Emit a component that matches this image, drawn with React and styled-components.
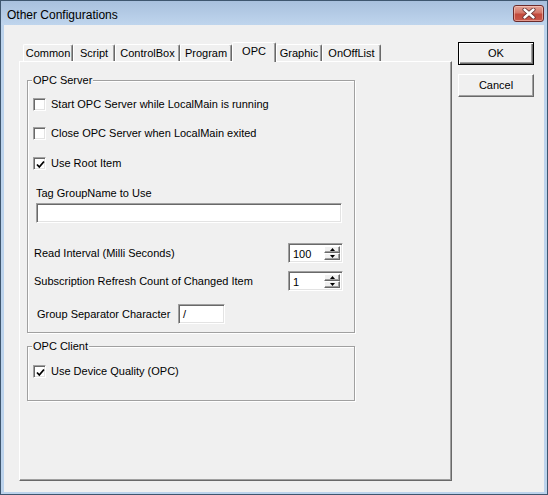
import React from "react";
import styled, { createGlobalStyle } from "styled-components";

const GlobalStyle = createGlobalStyle`
  html, body {
    margin: 0;
    padding: 0;
    background: #ffffff;
  }
  body {
    font-family: "Liberation Sans", Arial, sans-serif;
    font-size: 11px;
    color: #000;
  }
  * {
    box-sizing: border-box;
  }
`;

const tabs = [
  { name: "Common", width: 50 },
  { name: "Script", width: 42 },
  { name: "ControlBox", width: 65 },
  { name: "Program", width: 52 },
  { name: "OPC", width: 44, active: true },
  { name: "Graphic", width: 46 },
  { name: "OnOffList", width: 59 },
];

function Check({ checked }) {
  return (
    <CheckBox>
      {checked && (
        <svg width="9" height="9" viewBox="0 0 9 9">
          <polyline
            points="1,4.5 3.3,7 8,1.5"
            fill="none"
            stroke="#000"
            strokeWidth="1.8"
          />
        </svg>
      )}
    </CheckBox>
  );
}

function Spin({ value }) {
  return (
    <SpinBox>
      <SpinValue>{value}</SpinValue>
      <SpinButtons>
        <SpinButton>
          <svg width="5" height="3" viewBox="0 0 5 3">
            <polygon points="2.5,0 5,3 0,3" fill="#000" />
          </svg>
        </SpinButton>
        <SpinButton>
          <svg width="5" height="3" viewBox="0 0 5 3">
            <polygon points="0,0 5,0 2.5,3" fill="#000" />
          </svg>
        </SpinButton>
      </SpinButtons>
    </SpinBox>
  );
}

export default function App() {
  return (
    <>
      <GlobalStyle />
      <Window>
        <TitleBar>
          <Title>Other Configurations</Title>
          <CloseButton>
            <svg width="14" height="11" viewBox="0 0 14 11">
              <path
                d="M2.5 1.5 L11.5 9.5 M11.5 1.5 L2.5 9.5"
                stroke="#5a2a2a"
                strokeWidth="4"
                strokeLinecap="round"
              />
              <path
                d="M2.5 1.5 L11.5 9.5 M11.5 1.5 L2.5 9.5"
                stroke="#ffffff"
                strokeWidth="2.4"
                strokeLinecap="round"
              />
            </svg>
          </CloseButton>
        </TitleBar>
        <Client>
          <TabArea>
            <TabStrip>
              {tabs.map((t) => (
                <Tab key={t.name} $width={t.width} $active={t.active}>
                  {t.name}
                </Tab>
              ))}
            </TabStrip>
            <TabPanel>
              <Group $height={259}>
                <Legend>OPC Server</Legend>
                <CheckRow $top={11}>
                  <Check />
                  <span>Start OPC Server while LocalMain is running</span>
                </CheckRow>
                <CheckRow $top={16}>
                  <Check />
                  <span>Close OPC Server when LocalMain exited</span>
                </CheckRow>
                <CheckRow $top={17}>
                  <Check checked />
                  <span>Use Root Item</span>
                </CheckRow>
                <FieldLabel $top={17} $indent={3}>
                  Tag GroupName to Use
                </FieldLabel>
                <TextField $top={3} $indent={3} $width={306} />
                <FieldRow $top={20}>
                  <RowLabel $indent={1}>Read Interval (Milli Seconds)</RowLabel>
                  <Spin value="100" />
                </FieldRow>
                <FieldRow $top={8}>
                  <RowLabel $indent={1}>
                    Subscription Refresh Count of Changed Item
                  </RowLabel>
                  <Spin value="1" />
                </FieldRow>
                <FieldRow $top={13}>
                  <RowLabel $indent={4} $width={141}>
                    Group Separator Character
                  </RowLabel>
                  <TextField $width={47}>/</TextField>
                </FieldRow>
              </Group>
              <Group $height={61} $gap={7}>
                <Legend>OPC Client</Legend>
                <CheckRow $top={12}>
                  <Check checked />
                  <span>Use Device Quality (OPC)</span>
                </CheckRow>
              </Group>
            </TabPanel>
          </TabArea>
          <ButtonColumn>
            <DialogButton $default>OK</DialogButton>
            <DialogButton>Cancel</DialogButton>
          </ButtonColumn>
        </Client>
      </Window>
    </>
  );
}

const Window = styled.div`
  width: 548px;
  height: 495px;
  border: 1px solid #3e566f;
  background: #bcd3ec;
  display: flex;
  flex-direction: column;
`;

const TitleBar = styled.div`
  height: 24px;
  flex: none;
  display: flex;
  align-items: flex-start;
  padding: 0 3px 0 6px;
  background: linear-gradient(#a8c0dd, #bfd5ed);
`;

const Title = styled.div`
  font-family: "Liberation Sans", Arial, sans-serif;
  font-size: 12px;
  line-height: 24px;
  padding-top: 2px;
  color: #000;
`;

const CloseButton = styled.div`
  margin-left: auto;
  margin-top: 4px;
  width: 31px;
  height: 17px;
  border: 1px solid #6b2b2b;
  border-radius: 3px;
  background: linear-gradient(#e3a396 0%, #d4786a 45%, #c24a3c 55%, #c9584b 100%);
  box-shadow: inset 0 0 0 1px rgba(255, 220, 210, 0.5);
  display: flex;
  align-items: center;
  justify-content: center;
`;

const Client = styled.div`
  flex: 1;
  margin: 0 3px 2px 3px;
  background: #f0f0f0;
  display: flex;
  align-items: flex-start;
  padding: 17px 0 0 15px;
`;

const TabArea = styled.div`
  width: 433px;
  display: flex;
  flex-direction: column;
`;

const TabStrip = styled.div`
  height: 19px;
  display: flex;
  align-items: flex-end;
  padding-left: 4px;
`;

const Tab = styled.div`
  position: relative;
  z-index: ${(p) => (p.$active ? 2 : 0)};
  width: ${(p) => p.$width}px;
  height: ${(p) => (p.$active ? 20 : 17)}px;
  margin-bottom: ${(p) => (p.$active ? -1 : 0)}px;
  background: #f0f0f0;
  border-left: 1px solid #ffffff;
  border-top: 1px solid #ffffff;
  border-right: 1px solid #696969;
  border-radius: 2px 2px 0 0;
  box-shadow: inset -1px 0 #a0a0a0;
  text-align: center;
  line-height: 16px;
  white-space: nowrap;
`;

const TabPanel = styled.div`
  height: 420px;
  border: 1px solid;
  border-color: #ffffff #696969 #696969 #ffffff;
  box-shadow: inset -1px -1px #a0a0a0;
  padding: 12px 0 0 7px;
  display: flex;
  flex-direction: column;
  align-items: flex-start;
`;

const Group = styled.fieldset`
  margin: ${(p) => p.$gap || 0}px 0 0 0;
  width: 328px;
  height: ${(p) => p.$height}px;
  border: 1px solid #a0a0a0;
  box-shadow: inset 1px 1px #ffffff, 1px 1px #ffffff;
  padding: 0 11px 0 5px;
  display: flex;
  flex-direction: column;
  align-items: stretch;
  min-inline-size: 0;
`;

const Legend = styled.legend`
  padding: 0 1px;
  margin-left: -1px;
  line-height: 13px;
  background: #f0f0f0;
`;

const CheckRow = styled.div`
  margin-top: ${(p) => p.$top}px;
  height: 13px;
  display: flex;
  align-items: center;
  gap: 5px;
  line-height: 13px;
  white-space: nowrap;
`;

const CheckBox = styled.div`
  width: 13px;
  height: 13px;
  flex: none;
  background: #ffffff;
  border: 1px solid;
  border-color: #a0a0a0 #ffffff #ffffff #a0a0a0;
  box-shadow: inset 1px 1px #696969, inset -1px -1px #e3e3e3;
  display: flex;
  align-items: center;
  justify-content: center;
  padding: 1px 0 0 1px;
`;

const FieldLabel = styled.div`
  margin-top: ${(p) => p.$top}px;
  margin-left: ${(p) => p.$indent}px;
  line-height: 13px;
`;

const TextField = styled.div`
  margin-top: ${(p) => p.$top || 0}px;
  margin-left: ${(p) => p.$indent || 0}px;
  width: ${(p) => p.$width}px;
  height: 20px;
  flex: none;
  background: #ffffff;
  border: 1px solid;
  border-color: #a0a0a0 #ffffff #ffffff #a0a0a0;
  box-shadow: inset 1px 1px #696969, inset -1px -1px #e3e3e3;
  padding: 0 4px;
  line-height: 18px;
`;

const FieldRow = styled.div`
  margin-top: ${(p) => p.$top}px;
  height: 20px;
  display: flex;
  align-items: center;
`;

const RowLabel = styled.div`
  margin-left: ${(p) => p.$indent}px;
  width: ${(p) => (p.$width ? `${p.$width}px` : "auto")};
  flex: ${(p) => (p.$width ? "none" : "1")};
  line-height: 13px;
  white-space: nowrap;
`;

const SpinBox = styled.div`
  width: 55px;
  height: 20px;
  flex: none;
  background: #ffffff;
  border: 1px solid;
  border-color: #a0a0a0 #ffffff #ffffff #a0a0a0;
  box-shadow: inset 1px 1px #696969, inset -1px -1px #e3e3e3;
  display: flex;
  padding: 2px;
`;

const SpinValue = styled.div`
  flex: 1;
  padding-left: 2px;
  line-height: 16px;
`;

const SpinButtons = styled.div`
  width: 16px;
  display: flex;
  flex-direction: column;
`;

const SpinButton = styled.div`
  flex: 1;
  background: #f0f0f0;
  border: 1px solid;
  border-color: #ffffff #696969 #696969 #ffffff;
  box-shadow: inset -1px -1px #a0a0a0;
  display: flex;
  align-items: center;
  justify-content: center;
`;

const ButtonColumn = styled.div`
  margin-left: 6px;
  display: flex;
  flex-direction: column;
  gap: 9px;
`;

const DialogButton = styled.div`
  width: 76px;
  height: 23px;
  background: #f0f0f0;
  border: 1px solid;
  border-color: ${(p) =>
    p.$default ? "#000000" : "#ffffff #696969 #696969 #ffffff"};
  box-shadow: ${(p) =>
    p.$default
      ? "inset 1px 1px #ffffff, inset -1px -1px #696969, inset -2px -2px #a0a0a0"
      : "inset -1px -1px #a0a0a0"};
  display: flex;
  align-items: center;
  justify-content: center;
  line-height: 13px;
`;
